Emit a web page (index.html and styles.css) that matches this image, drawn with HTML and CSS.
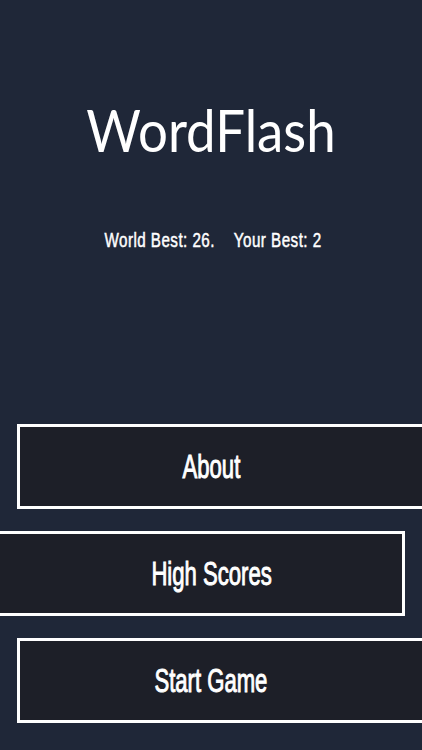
FILE: index.html
```html
<!DOCTYPE html>
<html>
<head>
<meta charset="utf-8">
<link rel="stylesheet" href="styles.css">
</head>
<body>
<div class="screen">
  <header class="head">
    <h1 class="title"><span class="title-text">WordFlash</span></h1>
    <p class="stats"><span class="cond">World Best: 26.</span><span class="cond">Your Best: 2</span></p>
  </header>
  <nav class="menu">
    <div class="btn btn-right"><span class="btn-text">About</span></div>
    <div class="btn btn-left"><span class="btn-text">High Scores</span></div>
    <div class="btn btn-right"><span class="btn-text">Start Game</span></div>
  </nav>
</div>
</body>
</html>
```
FILE: styles.css
```css
html, body {
  margin: 0;
  padding: 0;
  background: #1f2738;
}
.screen {
  width: 422px;
  height: 750px;
  overflow: hidden;
  background: #1f2738;
  color: #ffffff;
}
.head {
  padding-top: 95px;
  text-align: center;
}
.title {
  margin: 0;
  font-family: "Lato", "DejaVu Sans", sans-serif;
  font-weight: 400;
  font-size: 58px;
  line-height: 70px;
}
.title-text {
  display: inline-block;
  transform: scaleX(0.91);
}
.stats {
  margin: 63px 0 0;
  font-family: "Liberation Sans", Arial, sans-serif;
  font-weight: 400;
  font-size: 20px;
  line-height: 24px;
  display: flex;
  justify-content: center;
  -webkit-text-stroke: 0.5px #ffffff;
}
.cond {
  display: inline-block;
  transform: scaleX(0.76);
  letter-spacing: 0.6px;
  white-space: nowrap;
}
.cond + .cond {
  margin-left: -12px;
}
.menu {
  margin-top: 172px;
  display: flex;
  flex-direction: column;
  gap: 22px;
}
.btn {
  box-sizing: border-box;
  height: 85px;
  border: 3px solid #ffffff;
  background: #1d1f28;
  font-family: "Liberation Sans", Arial, sans-serif;
  font-weight: 400;
  font-size: 34px;
  display: flex;
  align-items: center;
  justify-content: center;
  -webkit-text-stroke: 1px #ffffff;
}
.btn-text {
  display: inline-block;
  transform: scaleX(0.65);
  white-space: nowrap;
}
.btn-right {
  margin-left: 17px;
  width: 440px;
  padding-right: 52px;
}
.btn-left {
  margin-left: -20px;
  width: 425px;
  padding-left: 38px;
}
```
